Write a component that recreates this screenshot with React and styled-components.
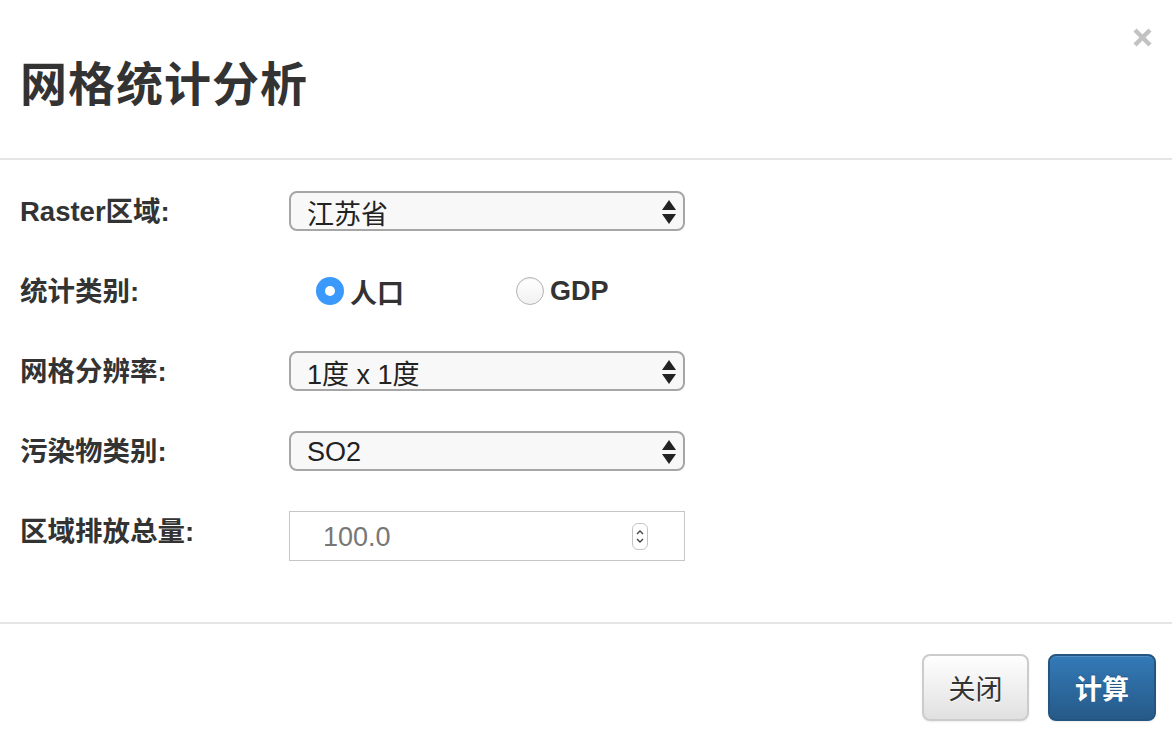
import React from 'react'
import styled, { createGlobalStyle } from 'styled-components'

const GlobalStyle = createGlobalStyle`
  html, body {
    margin: 0;
    padding: 0;
    background: #fff;
  }
  body {
    font-family: "Liberation Sans", "Noto Sans CJK SC", sans-serif;
    color: #333;
  }
`

const Modal = styled.div`
  width: 1172px;
  height: 732px;
  display: flex;
  flex-direction: column;
  background: #fff;
  overflow: hidden;
`

const Header = styled.div`
  height: 160px;
  box-sizing: border-box;
  border-bottom: 2px solid #e5e5e5;
  padding: 0 20px 0 20px;
  display: flex;
  justify-content: space-between;
  align-items: flex-start;
`

const Title = styled.h4`
  margin: 55px 0 0;
  font-size: 47px;
  line-height: 60px;
  font-weight: 700;
  letter-spacing: 1px;
  color: #333;
`

const Close = styled.button`
  margin-top: 28px;
  padding: 0;
  border: none;
  background: transparent;
  line-height: 0;
  cursor: pointer;
`

const Body = styled.div`
  padding: 31px 20px 0;
  display: flex;
  flex-direction: column;
  gap: 40px;
  flex: 1;
`

const Row = styled.div`
  display: grid;
  grid-template-columns: 269px 396px;
  align-items: start;
`

const Label = styled.label`
  font-size: 27.5px;
  font-weight: 700;
  line-height: 42px;
  height: 40px;
  color: #333;
`

const SelectBox = styled.div`
  height: 40px;
  box-sizing: border-box;
  border: 2px solid #a6a6a6;
  border-radius: 8px;
  background: #f8f8f8;
  display: flex;
  align-items: center;
  justify-content: space-between;
  padding: 2px 6px 0 16px;
  font-size: 27px;
  color: #222;
`

const Radios = styled.div`
  display: flex;
  height: 40px;
  align-items: center;
  padding-left: 27px;
`

const Option = styled.div`
  width: 200px;
  flex-shrink: 0;
  display: flex;
  align-items: center;
  gap: 6px;
  font-size: 27px;
  font-weight: 700;
  color: #333;
`

const Dot = styled.span`
  width: 28px;
  height: 28px;
  flex-shrink: 0;
  box-sizing: border-box;
  border-radius: 50%;
  display: flex;
  align-items: center;
  justify-content: center;
  background: ${p => (p.checked ? '#3b99fc' : 'linear-gradient(#fff, #f1f1f1)')};
  border: ${p => (p.checked ? 'none' : '1.5px solid #b5b5b5')};
  box-shadow: ${p => (p.checked ? 'none' : 'inset 0 1px 1px rgba(0,0,0,0.08)')};

  &::after {
    content: '';
    display: ${p => (p.checked ? 'block' : 'none')};
    width: 10px;
    height: 10px;
    border-radius: 50%;
    background: #fff;
  }
`

const NumberBox = styled.div`
  height: 50px;
  box-sizing: border-box;
  border: 1.5px solid #c6c6c6;
  background: #fff;
  display: flex;
  align-items: center;
  justify-content: space-between;
  padding: 2px 36px 0 33px;
  font-size: 27px;
  color: #777;
`

const Spinner = styled.span`
  width: 16px;
  height: 27px;
  box-sizing: border-box;
  border: 1px solid #c4c4c4;
  border-radius: 6px;
  display: flex;
  align-items: center;
  justify-content: center;
  margin-top: -2px;
`

const Footer = styled.div`
  height: 110px;
  box-sizing: border-box;
  border-top: 2px solid #e5e5e5;
  padding: 30px 16px 0;
  display: flex;
  justify-content: flex-end;
  align-items: flex-start;
  gap: 19px;
`

const Button = styled.button`
  height: 67px;
  width: ${p => (p.primary ? '108px' : '107px')};
  border-radius: 8px;
  font-family: inherit;
  font-size: 27px;
  font-weight: ${p => (p.primary ? 700 : 400)};
  cursor: pointer;
  border: 2px solid ${p => (p.primary ? '#245580' : '#cccccc')};
  color: ${p => (p.primary ? '#fff' : '#333')};
  background: ${p =>
    p.primary
      ? 'linear-gradient(#337ab7, #265a88)'
      : 'linear-gradient(#ffffff, #e0e0e0)'};
  text-shadow: ${p => (p.primary ? '0 -1px 0 rgba(0,0,0,0.2)' : '0 1px 0 #fff')};
  box-shadow: inset 0 1px 0 rgba(255,255,255,0.15), 0 1px 2px rgba(0,0,0,0.08);
`

const Arrows = () => (
  <svg width="16" height="26" viewBox="0 0 16 26">
    <polygon points="8,1 15,11 1,11" fill="#222" />
    <polygon points="1,15 15,15 8,25" fill="#222" />
  </svg>
)

const Select = ({ value }) => (
  <SelectBox>
    <span>{value}</span>
    <Arrows />
  </SelectBox>
)

export default function App() {
  return (
    <Modal>
      <GlobalStyle />
      <Header>
        <Title>网格统计分析</Title>
        <Close aria-label="close">
          <svg width="19" height="19" viewBox="0 0 19 19">
            <line x1="2" y1="2" x2="17" y2="17" stroke="#c2c2c2" strokeWidth="4.5" />
            <line x1="17" y1="2" x2="2" y2="17" stroke="#c2c2c2" strokeWidth="4.5" />
          </svg>
        </Close>
      </Header>
      <Body>
        <Row>
          <Label>Raster区域:</Label>
          <Select value="江苏省" />
        </Row>
        <Row>
          <Label>统计类别:</Label>
          <Radios>
            <Option>
              <Dot checked />
              人口
            </Option>
            <Option>
              <Dot />
              GDP
            </Option>
          </Radios>
        </Row>
        <Row>
          <Label>网格分辨率:</Label>
          <Select value="1度 x 1度" />
        </Row>
        <Row>
          <Label>污染物类别:</Label>
          <Select value="SO2" />
        </Row>
        <Row>
          <Label>区域排放总量:</Label>
          <NumberBox>
            <span>100.0</span>
            <Spinner>
              <svg width="10" height="19" viewBox="0 0 10 19">
                <polyline points="2,7 5,4 8,7" fill="none" stroke="#444" strokeWidth="1.4" />
                <polyline points="2,12 5,15 8,12" fill="none" stroke="#444" strokeWidth="1.4" />
              </svg>
            </Spinner>
          </NumberBox>
        </Row>
      </Body>
      <Footer>
        <Button>关闭</Button>
        <Button primary>计算</Button>
      </Footer>
    </Modal>
  )
}
